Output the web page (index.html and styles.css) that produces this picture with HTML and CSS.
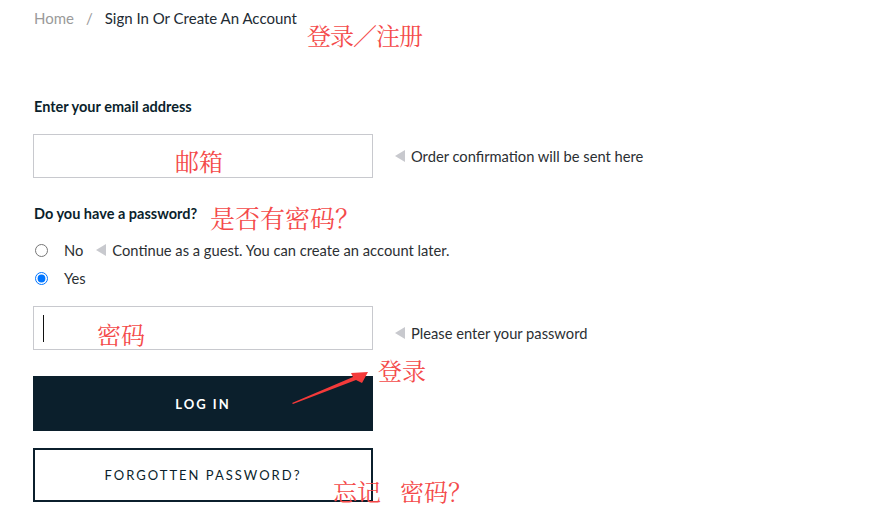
FILE: index.html
```html
<!DOCTYPE html>
<html lang="en">
<head>
<meta charset="utf-8">
<title>Sign In Or Create An Account</title>
<link rel="stylesheet" href="styles.css">
</head>
<body>
<div class="page">
  <nav class="crumbs">
    <span class="home">Home</span>
    <span class="sep">/</span>
    <span class="cur">Sign In Or Create An Account</span>
  </nav>

  <form class="form">
    <div class="lbl lbl-email">Enter your email address</div>
    <div class="row">
      <div class="field"></div>
      <span class="hint"><i class="tri"></i>Order confirmation will be sent here</span>
    </div>

    <div class="lbl lbl-pw">Do you have a password?</div>
    <label class="radio-row">
      <input type="radio" name="haspw" class="radio">
      <span class="opt">No</span>
      <span class="hint hint-inline"><i class="tri"></i>Continue as a guest. You can create an account later.</span>
    </label>
    <label class="radio-row">
      <input type="radio" name="haspw" class="radio" checked>
      <span class="opt">Yes</span>
    </label>

    <div class="row row-pw">
      <div class="field"><span class="caret"></span></div>
      <span class="hint hint-low"><i class="tri"></i>Please enter your password</span>
    </div>

    <button type="button" class="btn btn-dark">LOG IN</button>
    <button type="button" class="btn btn-outline">FORGOTTEN PASSWORD?</button>
  </form>

  <span class="note note-title">登录／注册</span>
  <span class="note note-email">邮箱</span>
  <span class="note note-haspw">是否有密码？</span>
  <span class="note note-pw">密码</span>
  <span class="note note-login">登录</span>
  <span class="note note-forgot">忘记<span class="gap">密码？</span></span>
  <svg class="arrow" width="90" height="50" viewBox="0 0 90 50">
    <polygon points="7,43 68,17 66,13 83,12 77,23 71,20 8,44" fill="#f43a3a"/>
  </svg>
</div>
</body>
</html>
```

FILE: styles.css
```css
* { box-sizing: border-box; }
html, body { margin: 0; padding: 0; background: #fff; }
body {
  font-family: "Lato", "Liberation Sans", sans-serif;
  color: #0b1f2c;
  width: 885px;
  height: 531px;
  overflow: hidden;
}
.page {
  position: relative;
  padding: 8px 0 0 34px;
  height: 531px;
}
.crumbs {
  display: flex;
  align-items: center;
  gap: 12px;
  font-size: 15px;
  line-height: 20px;
  height: 20px;
}
.home { color: #9a9a9a; }
.sep { color: #9a9a9a; }
.cur { color: #222b33; }

.form {
  display: flex;
  flex-direction: column;
  align-items: flex-start;
  margin-top: 69px;
  margin-left: -1px;
}
.lbl {
  font-size: 14.5px;
  font-weight: 700;
  line-height: 20px;
  color: #0b1f2c;
  padding-left: 1px;
}
.row {
  display: flex;
  align-items: center;
  gap: 22px;
  margin-top: 17px;
}
.field {
  width: 340px;
  height: 44px;
  border: 1px solid #c8c9ce;
  background: #fff;
  position: relative;
}
.caret {
  position: absolute;
  left: 9px;
  top: 8px;
  width: 1px;
  height: 27px;
  background: #111;
}
.hint {
  display: flex;
  align-items: center;
  font-size: 14.7px;
  color: #2b2f33;
  white-space: nowrap;
}
.tri {
  display: inline-block;
  width: 0;
  height: 0;
  border-top: 6px solid transparent;
  border-bottom: 6px solid transparent;
  border-right: 10px solid #c8c9ce;
  margin-right: 6px;
}
.lbl-pw { margin-top: 26px; }
.radio-row {
  display: flex;
  align-items: center;
  height: 28px;
  font-size: 14.7px;
  color: #2b2f33;
}
.lbl-pw + .radio-row { margin-top: 12px; }
.radio {
  width: 13px;
  height: 13px;
  margin: 0 16px 0 2px;
}
.opt { margin-right: 13px; }
.row-pw { margin-top: 14px; align-items: flex-start; }
.hint-low { margin-top: 18px; }
.btn {
  width: 340px;
  font-family: "Lato", "Liberation Sans", sans-serif;
  font-size: 13px;
  font-weight: 700;
  letter-spacing: 2px;
  cursor: pointer;
}
.btn-dark {
  margin-top: 26px;
  height: 55px;
  background: #0b1f2c;
  color: #fff;
  border: none;
}
.btn-outline {
  margin-top: 17px;
  height: 54px;
  background: #fff;
  color: #0b1f2c;
  border: 2px solid #0b1f2c;
  font-weight: 400;
}

.note {
  position: absolute;
  font-family: "Noto Serif CJK SC", "Noto Sans CJK SC", serif;
  font-size: 24px;
  line-height: 28px;
  color: #f44a4a;
  white-space: nowrap;
}
.note-title { left: 307px; top: 21px; letter-spacing: -1px; }
.note-email { left: 175px; top: 147px; }
.note-haspw { left: 210px; top: 203px; font-size: 25px; }
.note-pw { left: 97px; top: 320px; }
.note-login { left: 378px; top: 356px; }
.note-forgot { left: 333px; top: 477px; }
.gap { margin-left: 19px; }
.arrow { position: absolute; left: 285px; top: 360px; }
```
